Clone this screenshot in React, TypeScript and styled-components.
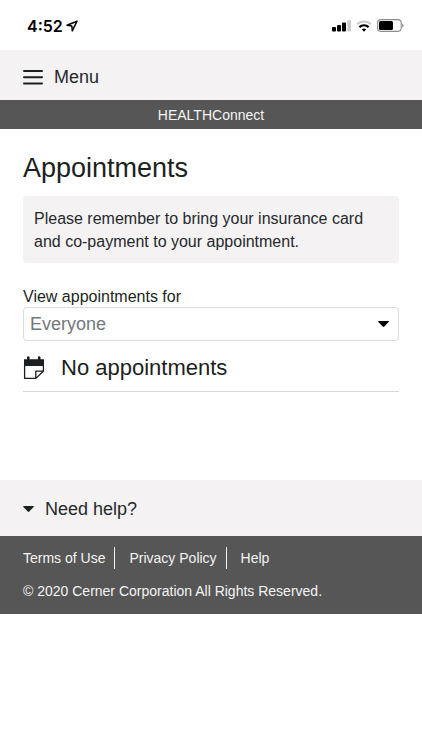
import React from "react";
import styled, { createGlobalStyle } from "styled-components";

const GlobalStyle = createGlobalStyle`
  *, *::before, *::after { box-sizing: border-box; }
  body {
    margin: 0;
    background: #fff;
    color: #1c1f21;
    font-family: "Liberation Sans", Arial, sans-serif;
    font-size: 16px;
  }
`;

const StatusBar = styled.div`
  display: flex;
  justify-content: space-between;
  align-items: center;
  height: 50px;
  padding: 1px 18px 0 27px;
  color: #000;
`;

const Clock = styled.div`
  display: flex;
  align-items: center;
  gap: 3px;
  font: 600 16px/20px Inter, sans-serif;
`;

const Indicators = styled.div`
  display: flex;
  align-items: center;
  gap: 5px;
`;

const MenuBar = styled.header`
  display: flex;
  padding: 0 23px;
  background: #f4f2f3;
`;

const MenuButton = styled.button`
  display: flex;
  align-items: center;
  gap: 11px;
  height: 50px;
  padding: 4px 0 0;
  border: 0;
  background: none;
  color: #26292c;
  font: 18px/24px "Liberation Sans", Arial, sans-serif;
`;

const Brand = styled.div`
  padding: 5px 0 4px;
  background: #565656;
  color: #f4f4f4;
  text-align: center;
  font-size: 14px;
  line-height: 20px;
`;

const Content = styled.main`
  padding: 23px 23px 88px;
`;

const Title = styled.h1`
  margin: 0 0 12px;
  font-size: 27px;
  line-height: 32px;
  font-weight: 400;
`;

const Notice = styled.p`
  margin: 0 0 24px;
  padding: 11px 11px 10px;
  border-radius: 4px;
  background: #f4f2f3;
  color: #26292c;
  line-height: 23px;
`;

const Label = styled.label`
  display: block;
  line-height: 20px;
`;

const SelectBox = styled.div`
  display: grid;
  align-items: center;

  > * { grid-area: 1 / 1; }
  > svg { justify-self: end; margin-right: 10px; pointer-events: none; }
`;

const Select = styled.select`
  appearance: none;
  width: 100%;
  height: 34px;
  padding: 0 32px 0 6px;
  border: 1px solid #dcdcde;
  border-radius: 4px;
  background: #fff;
  color: #74777b;
  font: 18px/24px "Liberation Sans", Arial, sans-serif;
`;

const EmptyState = styled.h2`
  display: flex;
  align-items: center;
  gap: 16px;
  height: 51px;
  margin: 0;
  padding-top: 4px;
  border-bottom: 1px solid #d8d8da;
  font-size: 22px;
  line-height: 28px;
  font-weight: 400;
`;

const HelpBar = styled.section`
  padding: 0 23px;
  background: #f4f2f3;
`;

const HelpButton = styled(MenuButton)`
  height: 56px;
  padding: 2px 0 0;
`;

const Footer = styled.footer`
  padding: 11px 23px 12px;
  background: #565656;
  color: #f4f4f4;
  font-size: 14px;
  line-height: 22px;
`;

const FooterLinks = styled.nav`
  display: flex;
  margin-bottom: 11px;
`;

const FooterLink = styled.a`
  color: inherit;
  text-decoration: none;

  & + & {
    margin-left: 9px;
    padding-left: 14px;
    border-left: 1px solid #f4f4f4;
  }
`;

const Copyright = styled.p`
  margin: 0;
`;

const LocationIcon = () => (
  <svg width="12" height="12" viewBox="0 0 12 12" fill="none" stroke="#000" strokeWidth="1.5" strokeLinejoin="round" aria-hidden="true">
    <path d="M11 1.2 1 5.2l4.8.7.5 4.9z" />
  </svg>
);

const SignalIcon = () => (
  <svg width="19" height="12" viewBox="0 0 19 12" aria-hidden="true">
    <rect x="0" y="7" width="4" height="4.5" rx="1" />
    <rect x="5" y="5" width="4" height="6.5" rx="1" />
    <rect x="10" y="2.5" width="4" height="9" rx="1" />
    <rect x="15.3" y="0" width="3.7" height="11.5" rx="1" fill="#ccc" />
  </svg>
);

const WifiIcon = () => (
  <svg width="16" height="12" viewBox="0 0 16 12" fill="none" strokeWidth="2" aria-hidden="true">
    <path d="M1 4.4a10 10 0 0 1 14 0" stroke="#ccc" />
    <path d="M3.4 7.1a6.6 6.6 0 0 1 9.2 0" stroke="#000" strokeWidth="2.2" />
    <path d="M5.8 9.5a3.2 3.2 0 0 1 4.4 0L8 11.8z" fill="#000" />
  </svg>
);

const BatteryIcon = () => (
  <svg width="27" height="13" viewBox="0 0 27 13" aria-hidden="true">
    <rect x=".6" y=".6" width="23.6" height="11.8" rx="3.3" fill="none" stroke="#8c8c8c" strokeWidth="1.1" />
    <rect x="2" y="2" width="14" height="9" rx="1.6" />
    <path d="M25.2 4.5c1.8.5 1.8 3.5 0 4z" fill="#8c8c8c" />
  </svg>
);

const MenuIcon = () => (
  <svg width="20" height="15" viewBox="0 0 20 15" stroke="#1c1f21" strokeWidth="2" strokeLinecap="round" aria-hidden="true">
    <path d="M1 1h18M1 7.2h18M1 13.4h18" />
  </svg>
);

const CaretIcon = ({ color = "#000" }: { color?: string }) => (
  <svg width="11" height="6" viewBox="0 0 11 6" fill={color} aria-hidden="true">
    <path d="M.7 0h9.6q1 .1.3.9L6.3 5.5q-.8.8-1.6 0L.4.9Q-.3.1.7 0z" />
  </svg>
);

const CalendarIcon = () => (
  <svg width="22" height="24" viewBox="0 0 22 24" aria-hidden="true">
    <path d="M1 3.2h3V1.4q0-1.2 1.3-1.2t1.3 1.2v1.8h8.3V1.4q0-1.2 1.3-1.2t1.3 1.2v1.8H21V10H1z" fill="#1c1f21" />
    <path d="M1.6 9v13.4h11.2l7.6-7.2V9M12.8 22.4v-7.2h7.6" fill="none" stroke="#1c1f21" strokeWidth="1.3" strokeLinejoin="round" />
  </svg>
);

export default function App() {
  return (
    <>
      <GlobalStyle />
      <StatusBar>
        <Clock>4:52 <LocationIcon /></Clock>
        <Indicators><SignalIcon /><WifiIcon /><BatteryIcon /></Indicators>
      </StatusBar>
      <MenuBar>
        <MenuButton type="button"><MenuIcon />Menu</MenuButton>
      </MenuBar>
      <Brand>HEALTHConnect</Brand>
      <Content>
        <Title>Appointments</Title>
        <Notice>Please remember to bring your insurance card and co-payment to your appointment.</Notice>
        <Label htmlFor="person">View appointments for</Label>
        <SelectBox>
          <Select id="person"><option>Everyone</option></Select>
          <CaretIcon />
        </SelectBox>
        <EmptyState><CalendarIcon />No appointments</EmptyState>
      </Content>
      <HelpBar>
        <HelpButton type="button" aria-expanded="false"><CaretIcon color="#1c1f21" />Need help?</HelpButton>
      </HelpBar>
      <Footer>
        <FooterLinks>
          <FooterLink href="#terms">Terms of Use</FooterLink>
          <FooterLink href="#privacy">Privacy Policy</FooterLink>
          <FooterLink href="#help">Help</FooterLink>
        </FooterLinks>
        <Copyright>© 2020 Cerner Corporation All Rights Reserved.</Copyright>
      </Footer>
    </>
  );
}
